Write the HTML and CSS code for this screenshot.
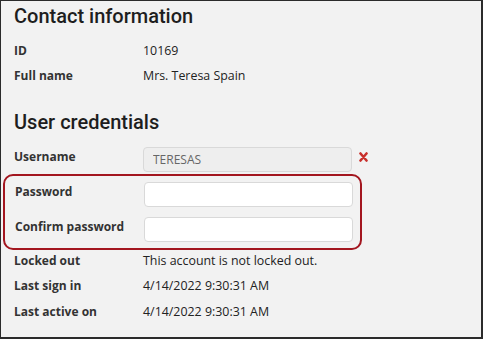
FILE: index.html
```html
<!DOCTYPE html>
<html lang="en">
<head>
    <meta charset="UTF-8">
    <title>User details</title>
    <link rel="stylesheet" href="styles.css">
</head>
<body>
    <div class="frame">

        <!-- Contact information -->
        <h2 class="section-title">Contact information</h2>
        <div class="row">
            <span class="label">ID</span>
            <span class="value">10169</span>
        </div>
        <div class="row">
            <span class="label">Full name</span>
            <span class="value">Mrs. Teresa Spain</span>
        </div>

        <!-- User credentials -->
        <h2 class="section-title second">User credentials</h2>
        <div class="row field-row">
            <span class="label">Username</span>
            <input class="field disabled" type="text" value="TERESAS" disabled>
            <svg class="remove" width="9" height="10" viewBox="0 0 9 10">
                <path d="M1.5 1.5 L7.5 8.5 M7.5 1.5 L1.5 8.5" stroke="#c9302c" stroke-width="2.6" stroke-linecap="round"/>
            </svg>
        </div>

        <div class="highlight">
            <div class="row field-row">
                <span class="label">Password</span>
                <input class="field" type="password">
            </div>
            <div class="row field-row">
                <span class="label">Confirm password</span>
                <input class="field" type="password">
            </div>
        </div>

        <div class="row info-row">
            <span class="label">Locked out</span>
            <span class="value">This account is not locked out.</span>
        </div>
        <div class="row info-row">
            <span class="label">Last sign in</span>
            <span class="value">4/14/2022 9:30:31 AM</span>
        </div>
        <div class="row info-row">
            <span class="label">Last active on</span>
            <span class="value">4/14/2022 9:30:31 AM</span>
        </div>
    </div>
</body>
</html>
```

FILE: styles.css
```css
/* General Styles */
* {
    margin: 0;
    padding: 0;
    box-sizing: border-box;
    font-family: "Open Sans", Arial, sans-serif;
}

body {
    background-color: #ffffff;
}

/* Outer frame of the panel */
.frame {
    width: 483px;
    height: 339px;
    background-color: #f2f2f2;
    border-style: solid;
    border-color: #2b2b2b;
    border-width: 1px 2px 2px 1px;
    padding: 3px 0 0 13px;
}

.section-title {
    font-family: Roboto, "Open Sans", sans-serif;
    font-size: 20px;
    font-weight: 500;
    color: #1e1e1e;
    line-height: 24px;
}

.section-title.second {
    margin-top: 22px;
}

/* Label / value rows */
.row {
    display: flex;
    align-items: center;
    height: 25px;
    font-size: 12px;
}

.section-title + .row {
    margin-top: 10px;
}

.label {
    width: 129px;
    flex-shrink: 0;
    font-weight: 700;
    color: #333;
}

.value {
    font-size: 12.4px;
    color: #222;
}

.field-row {
    align-items: flex-start;
}

.field-row .label {
    padding-top: 1px;
}

.section-title + .field-row {
    margin-top: 13px;
}

.field {
    width: 209px;
    height: 25px;
    border: 1px solid #d9d9d9;
    border-radius: 4px;
    background: #fff;
    padding: 0 9px;
    font-size: 12px;
    color: #555;
    outline: none;
}

.field.disabled {
    background: #eeeeee;
    color: #666;
}

.remove {
    margin: 5px 0 0 7px;
}

/* Red box round the password fields */
.highlight {
    margin: 2px 0 0 -11px;
    width: 359px;
    border: 2px solid #a3161f;
    border-radius: 10px;
    padding: 6px 7px 6px 10px;
}

.highlight .row + .row {
    margin-top: 10px;
}

.info-row {
    height: 20px;
}

.info-row + .info-row {
    margin-top: 5.5px;
}
```
